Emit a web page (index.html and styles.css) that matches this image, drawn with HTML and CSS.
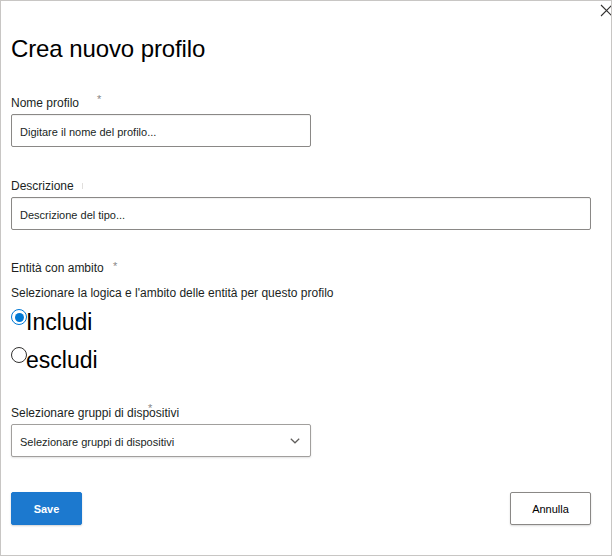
FILE: index.html
```
<!DOCTYPE html>
<html lang="it">
<head>
<meta charset="utf-8">
<title>Crea nuovo profilo</title>
<link rel="stylesheet" href="styles.css">
</head>
<body>
<div class="panel">
  <button class="close" aria-label="Chiudi">
    <svg width="13" height="13" viewBox="0 0 13 13"><path d="M1 1 L12 12 M12 1 L1 12" stroke="#323130" stroke-width="1.1" fill="none"/></svg>
  </button>
  <h1 class="title">Crea nuovo profilo</h1>

  <div class="field field-name">
    <div class="label">Nome profilo<span class="req req-name">*</span></div>
    <div class="textbox w-short"><span class="ph">Digitare il nome del profilo...</span></div>
  </div>

  <div class="field field-desc">
    <div class="label">Descrizione<span class="tick"></span></div>
    <div class="textbox w-long"><span class="ph">Descrizione del tipo...</span></div>
  </div>

  <div class="field field-scope">
    <div class="label">Entità con ambito<span class="req req-scope">*</span></div>
    <div class="hint">Selezionare la logica e l'ambito delle entità per questo profilo</div>
    <div class="radios">
      <div class="radio-row"><span class="radio checked"></span><span class="radio-label">Includi</span></div>
      <div class="radio-row"><span class="radio"></span><span class="radio-label">escludi</span></div>
    </div>
  </div>

  <div class="field field-groups">
    <div class="label">Selezionare gruppi di dispositivi<span class="req req-groups">*</span></div>
    <div class="dropdown w-short">
      <span class="ph">Selezionare gruppi di dispositivi</span>
      <svg class="chev" width="10" height="6" viewBox="0 0 10 6"><path d="M0.8 0.8 L5 4.8 L9.2 0.8" stroke="#605e5c" stroke-width="1.2" fill="none"/></svg>
    </div>
  </div>

  <div class="actions">
    <button class="btn btn-primary">Save</button>
    <button class="btn btn-default">Annulla</button>
  </div>
</div>
</body>
</html>
```
FILE: styles.css
```
html, body {
  margin: 0;
  padding: 0;
  background: #fff;
}

.panel {
  position: relative;
  box-sizing: border-box;
  width: 612px;
  height: 556px;
  border: 1px solid #c8c6c4;
  padding: 32px 0 0 10px;
  font-family: "Liberation Sans", Arial, sans-serif;
  color: #201f1e;
  background: #fff;
  overflow: hidden;
}

.close {
  position: absolute;
  top: 3px;
  right: -2px;
  width: 13px;
  height: 13px;
  padding: 0;
  border: 0;
  background: transparent;
  display: flex;
}

.title {
  margin: 0;
  font-size: 24px;
  font-weight: 400;
  line-height: 32px;
  letter-spacing: -0.1px;
  color: #000;
}

.field {
  display: flex;
  flex-direction: column;
}

.field-name { margin-top: 30px; }
.field-desc { margin-top: 31px; }
.field-scope { margin-top: 30px; }
.field-groups { margin-top: 32px; }

.label {
  position: relative;
  font-size: 12px;
  line-height: 16px;
  color: #201f1e;
}

.req {
  position: absolute;
  font-size: 11px;
  line-height: 10px;
  color: #8a8886;
}
.req-name { left: 86px; top: -1px; }
.req-scope { left: 102px; top: 1px; }
.req-groups { left: 137px; top: -2px; }

.tick {
  display: inline-block;
  width: 1px;
  height: 6px;
  margin-left: 8px;
  background: #e1dfdd;
  vertical-align: 1px;
}

.textbox, .dropdown {
  box-sizing: border-box;
  height: 33px;
  margin-top: 3px;
  border: 1px solid #8a8886;
  border-radius: 2px;
  padding: 0 10px 0 8px;
  display: flex;
  align-items: center;
  background: #fff;
  box-shadow: inset 0 1px 1px rgba(0, 0, 0, 0.06);
}

.dropdown {
  border-color: #a19f9d;
  justify-content: space-between;
  box-shadow: 0 1px 2px rgba(0, 0, 0, 0.12);
}

.w-short { width: 300px; }
.w-long { width: 580px; }

.ph {
  font-size: 11px;
  line-height: 16px;
  color: #201f1e;
  padding-top: 2px;
}

.hint {
  margin-top: 9px;
  font-size: 12px;
  line-height: 16px;
}

.radios {
  margin-top: 8px;
  display: flex;
  flex-direction: column;
  gap: 12px;
}

.radio-row {
  display: flex;
  align-items: flex-start;
  height: 26px;
}

.radio {
  box-sizing: border-box;
  width: 16px;
  height: 16px;
  border: 1px solid #323130;
  border-radius: 50%;
  background: #fff;
  display: flex;
  align-items: center;
  justify-content: center;
  flex: none;
}

.radio.checked {
  border-color: #0078d4;
}

.radio.checked::after {
  content: "";
  width: 9px;
  height: 9px;
  border-radius: 50%;
  background: #0078d4;
}

.radio-label {
  margin-left: -1px;
  font-size: 23px;
  line-height: 26px;
  color: #000;
}

.actions {
  margin-top: 35px;
  width: 580px;
  display: flex;
  justify-content: space-between;
}

.btn {
  box-sizing: border-box;
  height: 33px;
  padding: 0;
  border-radius: 2px;
  font-family: "Liberation Sans", Arial, sans-serif;
  font-size: 11px;
  line-height: 16px;
}

.btn-primary {
  width: 71px;
  border: 1px solid #1b78cf;
  background: #1c79cf;
  color: #fff;
  font-weight: 700;
  box-shadow: 0 1px 2px rgba(0, 0, 0, 0.18);
}

.btn-default {
  width: 81px;
  border: 1px solid #8a8886;
  background: #fff;
  color: #000;
  box-shadow: 0 1px 2px rgba(0, 0, 0, 0.15);
}
```
